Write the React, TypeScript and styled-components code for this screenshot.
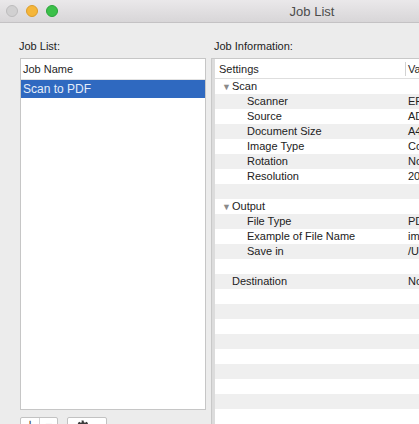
import React from 'react'
import styled, { createGlobalStyle } from 'styled-components'

const GlobalStyle = createGlobalStyle`
  html, body {
    margin: 0;
    padding: 0;
    background: #ececec;
  }
  body {
    font-family: "Liberation Sans", Helvetica, Arial, sans-serif;
    -webkit-font-smoothing: antialiased;
  }
`

const Viewport = styled.div`
  width: 419px;
  height: 424px;
  overflow: hidden;
  background: #ececec;
`

const Window = styled.div`
  width: 624px;
  height: 460px;
  display: flex;
  flex-direction: column;
`

const TitleBar = styled.div`
  position: relative;
  height: 22px;
  flex: none;
  display: flex;
  align-items: center;
  justify-content: center;
  background: linear-gradient(#eae8ea, #d8d6d8);
  border-bottom: 1px solid #c4c2c4;
`

const Lights = styled.div`
  position: absolute;
  left: 6px;
  top: 5px;
  display: flex;
  gap: 8px;
`

const Light = styled.span<{ $fill: string; $edge: string }>`
  width: 12px;
  height: 12px;
  border-radius: 50%;
  box-sizing: border-box;
  background: ${(p) => p.$fill};
  border: 1px solid ${(p) => p.$edge};
`

const Title = styled.div`
  font-size: 13px;
  color: #4c4c4c;
`

const Content = styled.div`
  flex: 1;
  display: flex;
  gap: 5px;
  padding: 16px 0 0 20px;
  min-height: 0;
`

const Column = styled.div<{ $width?: number }>`
  display: flex;
  flex-direction: column;
  ${(p) => (p.$width ? `width: ${p.$width}px; flex: none;` : 'flex: 1;')}
`

const Label = styled.div<{ $indent?: number }>`
  font-size: 11px;
  line-height: 14px;
  height: 14px;
  flex: none;
  margin: 0 0 5px ${(p) => p.$indent ?? -1}px;
  color: #1c1c1c;
`

const ListBox = styled.div`
  height: 352px;
  flex: none;
  box-sizing: border-box;
  background: #fff;
  border: 1px solid #c6c6c6;
`

const ListHeader = styled.div`
  height: 20px;
  line-height: 20px;
  padding-left: 2px;
  font-size: 11px;
  color: #262626;
  border-bottom: 1px solid #e2e2e2;
`

const ListItem = styled.div<{ $selected?: boolean }>`
  height: 18px;
  line-height: 18px;
  padding-left: 2px;
  font-size: 12px;
  color: ${(p) => (p.$selected ? '#e4edfa' : '#222')};
  background: ${(p) => (p.$selected ? '#2f69c0' : 'transparent')};
`

const ButtonRow = styled.div`
  display: flex;
  flex: none;
  gap: 9px;
  margin-top: 7px;
`

const Segmented = styled.div`
  display: flex;
  border: 1px solid #c2c2c2;
  border-radius: 2px;
  background: #fff;
`

const SegButton = styled.button<{ $w: number }>`
  width: ${(p) => p.$w}px;
  height: 20px;
  padding: 0;
  border: none;
  background: transparent;
  font-family: inherit;
  font-size: 14px;
  line-height: 12px;
  display: flex;
  justify-content: center;
  align-items: flex-start;
  color: #333;
  & + & {
    border-left: 1px solid #d4d4d4;
  }
`

const GearButton = styled.button`
  width: 40px;
  height: 22px;
  box-sizing: border-box;
  padding: 2px 0 0;
  display: flex;
  justify-content: center;
  align-items: flex-start;
  gap: 3px;
  border: 1px solid #c2c2c2;
  border-radius: 2px;
  background: #fff;
`

const TableFrame = styled.div`
  flex: 1;
  display: flex;
  border-left: 1px solid #c8c8c8;
  border-top: 1px solid #c8c8c8;
  padding-left: 3px;
  background: #dcdcdc;
  min-height: 0;
`

const Table = styled.div`
  flex: 1;
  background: #fff;
  overflow: hidden;
`

const HeaderRow = styled.div`
  display: flex;
  height: 19px;
  align-items: center;
  font-size: 11px;
  color: #262626;
  border-bottom: 1px solid #dedede;
`

const HeaderCell = styled.div<{ $w?: number }>`
  ${(p) => (p.$w ? `width: ${p.$w}px; flex: none;` : 'flex: 1;')}
  box-sizing: border-box;
  padding-left: 4px;
  line-height: 14px;
  white-space: nowrap;
  & + & {
    border-left: 1px solid #d2d2d2;
    padding-left: 2px;
  }
`

const Row = styled.div<{ $odd: boolean }>`
  display: flex;
  height: 15px;
  line-height: 15px;
  font-size: 11px;
  color: #222;
  background: ${(p) => (p.$odd ? '#efefef' : '#fff')};
  white-space: nowrap;
`

const NameCell = styled.div<{ $indent: number }>`
  width: 190px;
  flex: none;
  box-sizing: border-box;
  padding-left: ${(p) => p.$indent}px;
  display: flex;
  align-items: center;
`

const ValueCell = styled.div`
  flex: 1;
  padding-left: 3px;
`

const Disclosure = styled.span`
  font-size: 9px;
  color: #8a8a8a;
  width: 10px;
  margin-top: 1px;
`

type Item = { name?: string; value?: string; group?: boolean; child?: boolean }

const rows: Item[] = [
  { name: 'Scan', group: true },
  { name: 'Scanner', value: 'EPSON DS-530', child: true },
  { name: 'Source', value: 'ADF (Duplex)', child: true },
  { name: 'Document Size', value: 'A4', child: true },
  { name: 'Image Type', value: 'Color', child: true },
  { name: 'Rotation', value: 'None', child: true },
  { name: 'Resolution', value: '200 dpi', child: true },
  {},
  { name: 'Output', group: true },
  { name: 'File Type', value: 'PDF', child: true },
  { name: 'Example of File Name', value: 'img20170101.pdf', child: true },
  { name: 'Save in', value: '/Users/Documents', child: true },
  {},
  { name: 'Destination', value: 'None' },
]

const allRows: Item[] = [...rows, ...Array.from({ length: 12 }, () => ({}))]

function GearIcon() {
  return (
    <svg width="13" height="13" viewBox="0 0 24 24">
      <path
        fill="#3a3a3a"
        fillRule="evenodd"
        d="M10 1h4l.6 3.2 2.2.9 2.7-1.9 2.8 2.8-1.9 2.7.9 2.2L23 11.5v4l-3.2.6-.9 2.2 1.9 2.7-2.8 2.8-2.7-1.9-2.2.9L12.5 26h-1l-.6-3.2-2.2-.9-2.7 1.9-2.8-2.8 1.9-2.7-.9-2.2L1 15.5v-4l3.2-.6.9-2.2-1.9-2.7L6 3.2l2.7 1.9 2.2-.9zM12 9a4 4 0 100 8 4 4 0 000-8z"
      />
    </svg>
  )
}

function Caret() {
  return (
    <svg width="6" height="13" viewBox="0 0 6 13">
      <path fill="#3a3a3a" d="M0 7h6l-3 3.5z" />
    </svg>
  )
}

export default function App() {
  return (
    <Viewport>
      <GlobalStyle />
      <Window>
        <TitleBar>
          <Lights>
            <Light $fill="#d1d0d1" $edge="#bdbcbd" />
            <Light $fill="#f5b63a" $edge="#dc9d2a" />
            <Light $fill="#3cc04a" $edge="#2aa43a" />
          </Lights>
          <Title>Job List</Title>
        </TitleBar>
        <Content>
          <Column $width={186}>
            <Label>Job List:</Label>
            <ListBox>
              <ListHeader>Job Name</ListHeader>
              <ListItem $selected>Scan to PDF</ListItem>
            </ListBox>
            <ButtonRow>
              <Segmented>
                <SegButton $w={18}>+</SegButton>
                <SegButton $w={18}>−</SegButton>
              </Segmented>
              <GearButton>
                <GearIcon />
                <Caret />
              </GearButton>
            </ButtonRow>
          </Column>
          <Column>
            <Label $indent={3}>Job Information:</Label>
            <TableFrame>
              <Table>
                <HeaderRow>
                  <HeaderCell $w={190}>Settings</HeaderCell>
                  <HeaderCell>Value</HeaderCell>
                </HeaderRow>
                {allRows.map((r, i) => (
                  <Row key={i} $odd={i % 2 === 1}>
                    <NameCell $indent={r.group ? 7 : r.child ? 32 : 17}>
                      {r.group && <Disclosure>▼</Disclosure>}
                      {r.name}
                    </NameCell>
                    <ValueCell>{r.value}</ValueCell>
                  </Row>
                ))}
              </Table>
            </TableFrame>
          </Column>
        </Content>
      </Window>
    </Viewport>
  )
}
